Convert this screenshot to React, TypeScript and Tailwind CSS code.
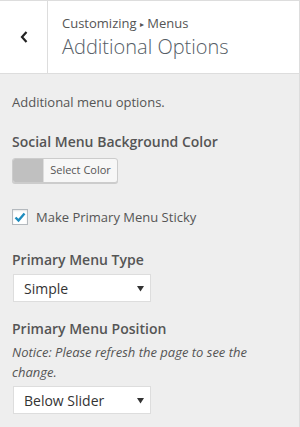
import React from "react";

const Caret = () => (
  <svg width="7" height="7" viewBox="0 0 7 7" className="shrink-0">
    <path d="M0 1 L7 1 L3.5 6.5 Z" fill="#333" />
  </svg>
);

function Select({ value }: { value: string }) {
  return (
    <div className="flex h-[28px] w-[138px] items-center justify-between border border-[#ddd] bg-white pl-[10px] pr-[6px] text-[14px] text-[#333]">
      <span>{value}</span>
      <Caret />
    </div>
  );
}

export default function App() {
  return (
    <div
      className="h-[427px] w-[300px] overflow-hidden border-r border-[#ddd] bg-[#eeeeee] text-[#555]"
      style={{ fontFamily: '"Open Sans", "Noto Sans", sans-serif' }}
    >
      <div className="flex h-[74px] border-y border-[#ddd] bg-white">
        <div className="flex w-[48px] shrink-0 items-center justify-center border-r border-[#ddd]">
          <svg width="10" height="14" viewBox="0 0 10 14">
            <path d="M7.5 2 L3 7 L7.5 12" stroke="#222" strokeWidth="2.2" fill="none" />
          </svg>
        </div>
        <div className="flex flex-col justify-center pl-[14px] pt-[1px]">
          <div className="text-[13px] leading-[18px] text-[#555]">
            Customizing <span className="text-[8px] align-[1px]">▸</span> Menus
          </div>
          <div className="text-[20px] font-light leading-[28px] text-[#555d66]">Additional Options</div>
        </div>
      </div>

      <div className="px-[12px] pt-[18px]">
        <div className="text-[13px] leading-[20px]">Additional menu options.</div>

        <div className="mt-[18px] text-[14px] font-semibold leading-[24px]">Social Menu Background Color</div>
        <div className="mt-[4px] flex h-[25px] w-[106px] overflow-hidden rounded-[3px] border border-[#ccc] bg-[#f7f7f7] shadow-[0_1px_0_#ccc]">
          <div className="w-[30px] bg-[#c0c0c0]" />
          <div className="flex flex-1 items-center justify-center border-l border-[#ddd] text-[11px] text-[#555]">
            Select Color
          </div>
        </div>

        <div className="mt-[24px] flex items-center gap-[8px]">
          <div className="flex h-[16px] w-[16px] items-center justify-center border border-[#b4b9be] bg-white shadow-[inset_0_1px_2px_rgba(0,0,0,0.1)]">
            <svg width="14" height="14" viewBox="0 0 14 14">
              <path d="M2.5 7.5 L5.5 10.5 L11.5 3.5" stroke="#1e8cbe" strokeWidth="2.4" fill="none" />
            </svg>
          </div>
          <span className="text-[13px] leading-[20px]">Make Primary Menu Sticky</span>
        </div>

        <div className="mt-[21px] text-[14px] font-semibold leading-[24px]">Primary Menu Type</div>
        <div className="ml-[1px] mt-[2px]">
          <Select value="Simple" />
        </div>

        <div className="mt-[15px] text-[14px] font-semibold leading-[24px]">Primary Menu Position</div>
        <div className="mt-[1px] text-[13px] italic leading-[20px] text-[#555]">
          Notice: Please refresh the page to see the change.
        </div>
        <div className="ml-[1px] mt-[4px]">
          <Select value="Below Slider" />
        </div>
      </div>
    </div>
  );
}
